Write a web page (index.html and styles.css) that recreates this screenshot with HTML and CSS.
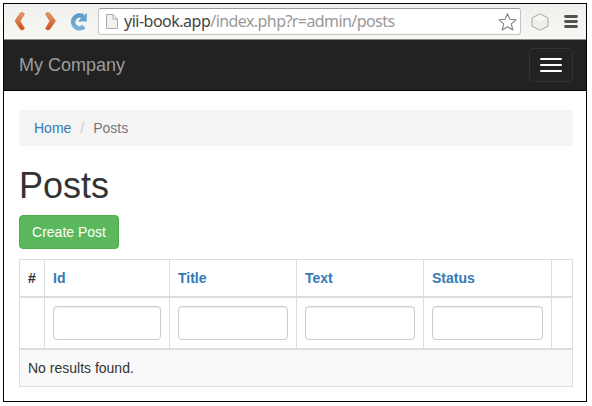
FILE: index.html
```
<!DOCTYPE html>
<html lang="en">
<head>
<meta charset="utf-8">
<title>Posts</title>
<link rel="stylesheet" href="styles.css">
</head>
<body>
<div class="window">
  <div class="toolbar">
    <svg class="nav-icons" width="94" height="35" viewBox="0 0 94 35">
      <defs>
        <linearGradient id="orange" x1="0" y1="0" x2="0" y2="1"><stop offset="0" stop-color="#e9a070"/><stop offset="1" stop-color="#cf4c12"/></linearGradient>
        <linearGradient id="blue" x1="0" y1="0" x2="0" y2="1"><stop offset="0" stop-color="#5e9bcb"/><stop offset="1" stop-color="#78b0da"/></linearGradient>
      </defs>
      <path d="M18.500 8.500L20.500 10L16 17L20.500 24.500L18.500 26L16.500 25.500L11 17L16.500 9Z" fill="url(#orange)" stroke="#c56537" stroke-width=".7" stroke-linejoin="round"/>
      <path d="M43.500 8.500L41.500 10L46 17L41.500 24.500L43.500 26L45.500 25.500L51.500 17L45.500 9Z" fill="url(#orange)" stroke="#c56537" stroke-width=".7" stroke-linejoin="round"/>
      <path d="M79 12.500A6.400 6.400 0 1 0 80 22.500" fill="none" stroke="url(#blue)" stroke-width="4.600"/>
      <path d="M82.800 9V17.500H74L77.500 13.500Z" fill="#6aa2ce"/>
    </svg>
    <div class="address">
      <svg class="page-icon" width="12" height="15" viewBox="0 0 12 15"><path d="M.5.5H7L11.500 5V14.500H.5ZM7 .5V5H11.500" fill="#f1f1ef" stroke="#aaa" /></svg>
      <span class="url"><span class="host">yii-book.app</span>/index.php?r=admin/posts</span>
      <svg class="star" width="19" height="18" viewBox="0 0 19 18"><path d="M9.500 .8L11.800 6.300L18 6.800L13.300 10.900L14.800 17L9.500 13.700L4.200 17L5.700 10.900L1 6.800L7.200 6.300Z" fill="#fff" stroke="#858585" stroke-width="1.100" stroke-linejoin="round"/></svg>
    </div>
    <svg class="hexagon" width="18" height="18" viewBox="0 0 18 18"><path d="M9 .8L17 4.800V13.200L9 17.200L1 13.200V4.800Z" fill="#eeeeec" stroke="#aaa" stroke-linejoin="round"/><path d="M9 2L15.500 5.500L9 9L2.500 5.500Z" fill="#f8f8f6"/></svg>
    <svg class="menu" width="14" height="13" viewBox="0 0 14 13"><path d="M1.500 1.500H12.500M1.500 6.500H12.500M1.500 11.500H12.500" stroke="#505450" stroke-width="2.800" stroke-linecap="round"/></svg>
  </div>
  <nav class="navbar">
    <a class="brand">My Company</a>
    <button class="toggle" aria-label="Toggle navigation"><span></span><span></span><span></span></button>
  </nav>
  <main class="content">
    <div class="breadcrumb"><a>Home</a><span class="slash">/</span><span>Posts</span></div>
    <h1>Posts</h1>
    <a class="create">Create Post</a>
    <table>
      <colgroup><col class="c-num"><col class="c-id"><col class="c-title"><col class="c-text"><col class="c-status"><col class="c-action"></colgroup>
      <tr class="heads"><th>#</th><th><a>Id</a></th><th><a>Title</a></th><th><a>Text</a></th><th><a>Status</a></th><th></th></tr>
      <tr class="filters"><td></td><td><input></td><td><input></td><td><input></td><td><input></td><td></td></tr>
      <tr class="empty"><td colspan="6">No results found.</td></tr>
    </table>
  </main>
</div>
</body>
</html>
```
FILE: styles.css
```
* { box-sizing: border-box; }
body { margin: 0; background: #fff; color: #333; font: 14px/20px "Liberation Sans", Arial, sans-serif; }
.window { width: 584px; height: 399px; margin: 3px; border: 1px solid #000; }
.toolbar { display: flex; align-items: center; height: 36px; background: linear-gradient(#f0f0ee, #f7f7f4); border-bottom: 1px solid #8a8a88; }
.nav-icons { flex: none; }
.address { display: flex; align-items: center; width: 423px; height: 27px; padding: 0 3px 0 7px; background: #fff; border: 1px solid #c4c4c0; border-top-color: #999; border-radius: 3px; }
.page-icon { flex: none; margin-right: 6px; }
.url { position: relative; top: -1px; font: 16px/24px "Noto Sans", sans-serif; color: #999; white-space: nowrap; letter-spacing: -0.57px; }
.host { color: #444; letter-spacing: -0.5px; }
.star { flex: none; margin-left: auto; }
.hexagon { margin-left: 10px; }
.menu { margin-left: 15px; }
.navbar { display: flex; align-items: center; justify-content: space-between; height: 51px; padding: 0 13px 0 15px; background: #222; border-bottom: 1px solid #000; }
.brand { color: #9d9d9d; font-size: 18px; }
.toggle { display: flex; flex-direction: column; align-items: center; justify-content: center; gap: 4px; width: 44px; height: 34px; padding: 0; background: transparent; border: 1px solid #333; border-radius: 4px; }
.toggle span { width: 22px; height: 2px; background: #fff; border-radius: 1px; }
.content { padding: 19px 13px 0 15px; }
.breadcrumb { height: 36px; padding: 8px 15px; background: #f4f4f4; border-radius: 4px; color: #777; }
a { color: #337ab7; }
.navbar .brand { color: #9d9d9d; }
.slash { padding: 0 9px; color: #ccc; }
h1 { margin: 20px 0 10px; font-size: 36px; line-height: 39px; font-weight: 400; }
.create { display: flex; align-items: center; justify-content: center; width: 100px; height: 34px; color: #fff; background: #5cb85c; border: 1px solid #4cae4c; border-radius: 4px; }
table { table-layout: fixed; width: 554px; margin-top: 10px; border-spacing: 0; border: solid #ddd; border-width: 1px 0 0 1px; }
.c-num { width: 25px; }
.c-id { width: 125px; }
.c-title { width: 127px; }
.c-text { width: 127px; }
.c-status { width: 128px; }
.c-action { width: 21px; }
th, td { padding: 8px; border: solid #ddd; border-width: 0 1px 2px 0; text-align: left; vertical-align: middle; }
.heads th { height: 38px; }
.filters td { height: 52px; }
.empty td { height: 37px; border-bottom-width: 1px; background: #f9f9f9; }
input { display: block; width: 100%; height: 34px; border: 1px solid #ccc; border-radius: 4px; box-shadow: inset 0 1px 1px #00000013; }
```
